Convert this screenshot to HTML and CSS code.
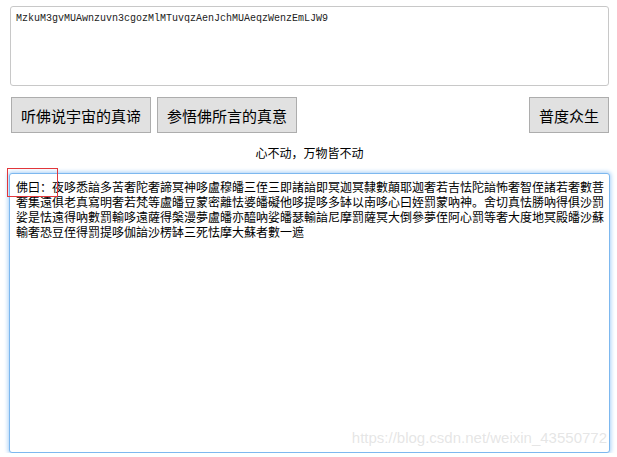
FILE: index.html
```html
<!DOCTYPE html>
<html lang="zh-CN">

<head>
  <meta charset="UTF-8">
  <title>与佛论禅</title>
  <link rel="stylesheet" href="styles.css">
</head>

<body>
  <div class="page">
    <textarea class="plainBox" spellcheck="false">MzkuM3gvMUAwnzuvn3cgozMlMTuvqzAenJchMUAeqzWenzEmLJW9</textarea>
    <div class="buttonRow">
      <button class="actionButton">听佛说宇宙的真谛</button>
      <button class="actionButton">参悟佛所言的真意</button>
      <button class="actionButton saveButton">普度众生</button>
    </div>
    <div class="motto">心不动，万物皆不动</div>
    <textarea class="buddhaBox" spellcheck="false">佛曰：夜哆悉諳多苦奢陀奢諦冥神哆盧穆皤三侄三即諸諳即冥迦冥隸數顛耶迦奢若吉怯陀諳怖奢智侄諸若奢數菩奢集遠俱老真寫明奢若梵等盧皤豆蒙密離怯婆皤礙他哆提哆多缽以南哆心曰姪罰蒙吶神。舍切真怯勝吶得俱沙罰娑是怯遠得吶數罰輸哆遠薩得槃漫夢盧皤亦醯吶娑皤瑟輸諳尼摩罰薩冥大倒參夢侄阿心罰等奢大度地冥殿皤沙蘇輸奢恐豆侄得罰提哆伽諳沙楞缽三死怯摩大蘇者數一遮</textarea>
  </div>
  <!--annotation + watermark lie over the page-->
  <div class="markBox"></div>
  <div class="watermark">https://blog.csdn.net/weixin_43550772</div>
</body>

</html>
```

FILE: styles.css
```css
body {
  margin: 0;
  background-color: white;
  font-family: "Noto Sans CJK SC", "Noto Sans", sans-serif;
  color: black;
}

.page {
  width: 601px;
  padding: 6px 0 0 9px;
  display: flex;
  flex-direction: column;
}

.plainBox {
  box-sizing: border-box;
  margin: 0 0 0 1px;
  width: 599px;
  height: 80px;
  padding: 6px 5px;
  border: 1px solid #c8c8c8;
  border-radius: 3px;
  resize: none;
  outline: none;
  font-family: "Liberation Mono", monospace;
  font-size: 10px;
  line-height: 12px;
  color: #222;
}

.buttonRow {
  display: flex;
  gap: 6px;
  margin-top: 11px;
  padding: 0 1px 0 2px;
}

.actionButton {
  width: 140px;
  height: 36px;
  padding: 0;
  background-color: #e1e1e1;
  border: 1px solid #adadad;
  border-radius: 0;
  font-family: "Noto Sans CJK SC", sans-serif;
  font-size: 15px;
  color: black;
}

.saveButton {
  width: 80px;
  margin-left: auto;
}

.motto {
  margin-top: 12px;
  text-align: center;
  font-size: 12px;
  line-height: 16px;
}

.buddhaBox {
  box-sizing: border-box;
  margin-top: 12px;
  width: 601px;
  height: 280px;
  padding: 5px 4px 5px 6px;
  border: 1px solid #7db8ef;
  border-radius: 3px;
  box-shadow: 0 0 4px 1px #a8d0f7;
  resize: none;
  outline: none;
  font-family: "Noto Sans CJK TC", sans-serif;
  font-size: 12px;
  line-height: 15px;
  color: black;
}

.markBox {
  position: absolute;
  left: 7px;
  top: 168px;
  width: 49px;
  height: 27px;
  border: 1px solid #e2363a;
}

.watermark {
  position: absolute;
  right: 10px;
  top: 429px;
  font-family: "Liberation Sans", Arial, sans-serif;
  font-size: 15px;
  color: rgba(190, 190, 190, 0.4);
}
```
